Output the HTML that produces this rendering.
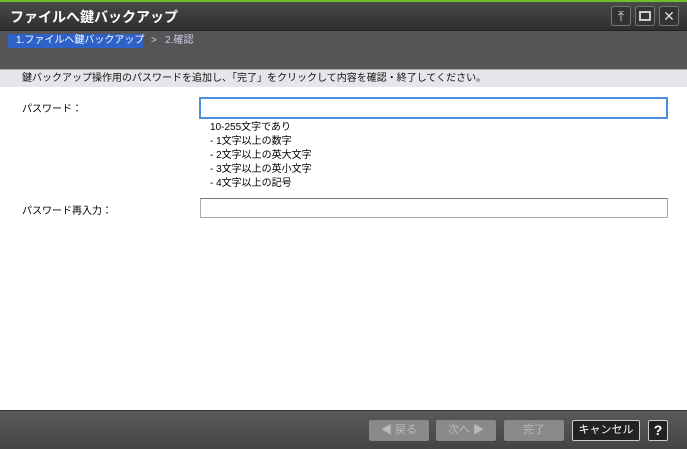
<!DOCTYPE html><html><head><meta charset="utf-8"><style>
*{margin:0;padding:0;box-sizing:border-box}
body{width:687px;height:449px;position:relative;overflow:hidden;background:#fff;font-family:"Liberation Sans","Noto Sans CJK JP",sans-serif;font-size:11px}
.a{position:absolute;white-space:nowrap}
.tb{left:0;top:0;width:687px;height:31px;background:linear-gradient(#4a4a4a,#2e2e2e);border-top:2px solid #6fbf2a;border-bottom:1px solid #222}
.wb{top:6px;width:20px;height:20px;border:1px solid #777;border-radius:3px;background:#333;color:#ddd;text-align:center;line-height:18px;font-size:14px}
.btn{top:420px;height:21px;border:1px solid #888;border-radius:2px;background:#8a8a8a;color:#bbb;text-align:center;line-height:19px;font-size:11px}
</style></head><body>
<div class="a tb"></div>
<div class="a" style="left:10px;top:7px;color:#fff;font-size:14px;font-weight:bold">ファイルへ鍵バックアップ</div>
<div class="a wb" style="left:611px">⤒</div>
<div class="a wb" style="left:635px"><div style="margin:4px 3px;width:12px;height:10px;border:2px solid #ccc"></div></div>
<div class="a wb" style="left:659px">✕</div>
<div class="a" style="left:0;top:31px;width:687px;height:38px;background:#555"></div>
<div class="a" style="left:8px;top:34px;width:135px;height:14px;background:#2f62c8;color:#fff;padding-left:8px;line-height:14px;font-size:10px">1.ファイルへ鍵バックアップ</div>
<div class="a" style="left:151px;top:34px;color:#cce;line-height:14px;font-size:10px">&gt;&nbsp;&nbsp;&nbsp;2.確認</div>
<div class="a" style="left:0;top:69px;width:687px;height:18px;background:#e6e6ea;border-top:1px solid #aaa;padding-left:22px;line-height:17px;font-size:10px;color:#111">鍵バックアップ操作用のパスワードを追加し、「完了」をクリックして内容を確認・終了してください。</div>
<div class="a" style="left:22px;top:100px;font-size:10px">パスワード：</div>
<div class="a" style="left:199px;top:97px;width:469px;height:22px;border:2px solid #4a90e2"></div>
<div class="a" style="left:210px;top:121px;font-size:10px;line-height:14px">10-255文字であり<br>- 1文字以上の数字<br>- 2文字以上の英大文字<br>- 3文字以上の英小文字<br>- 4文字以上の記号</div>
<div class="a" style="left:22px;top:202px;font-size:10px">パスワード再入力：</div>
<div class="a" style="left:200px;top:198px;width:468px;height:20px;border:1px solid #aaa;border-top-color:#777"></div>
<div class="a" style="left:0;top:410px;width:687px;height:39px;background:linear-gradient(#5a5a5a,#444);border-top:1px solid #333"></div>
<div class="a btn" style="left:369px;width:60px">◀ 戻る</div>
<div class="a btn" style="left:436px;width:60px">次へ ▶</div>
<div class="a btn" style="left:504px;width:60px">完了</div>
<div class="a btn" style="left:572px;width:68px;background:#222;color:#fff;border-color:#ccc">キャンセル</div>
<div class="a btn" style="left:648px;width:20px;background:#222;color:#fff;border-color:#ccc;font-weight:bold;font-size:14px">?</div>
</body></html>
